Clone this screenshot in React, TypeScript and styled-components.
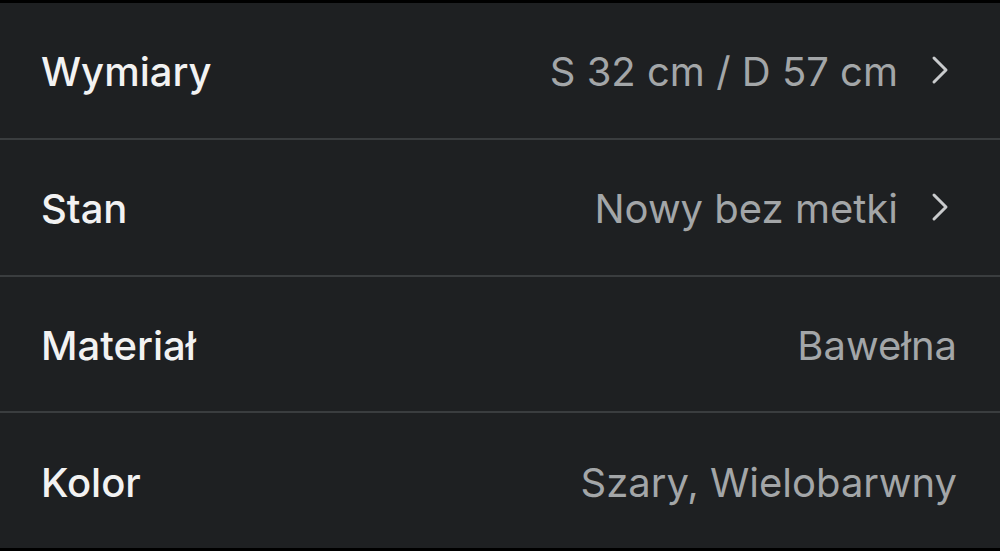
import React from 'react'
import styled, { createGlobalStyle } from 'styled-components'

const GlobalStyle = createGlobalStyle`
  html, body {
    margin: 0;
    padding: 0;
    background: #000;
  }
  body {
    font-family: Inter, "Noto Sans", sans-serif;
  }
`

interface Detail {
  label: string
  value: string
  link?: boolean
}

const details: Detail[] = [
  { label: 'Wymiary', value: 'S 32 cm / D 57 cm', link: true },
  { label: 'Stan', value: 'Nowy bez metki', link: true },
  { label: 'Materiał', value: 'Bawełna' },
  { label: 'Kolor', value: 'Szary, Wielobarwny' },
]

const Chevron = () => (
  <svg width="18" height="30" viewBox="0 0 18 30" fill="none">
    <path d="M3 3 L15 15 L3 27" stroke="#c9cbcd" strokeWidth="3" strokeLinecap="round" strokeLinejoin="round" />
  </svg>
)

const App: React.FC = () => (
  <>
    <GlobalStyle />
    <StyledScreen>
      <StyledList>
        {details.map((d) => (
          <StyledRow key={d.label}>
            <StyledLabel>{d.label}</StyledLabel>
            <StyledValue $link={d.link}>
              {d.value}
              {d.link && <Chevron />}
            </StyledValue>
          </StyledRow>
        ))}
      </StyledList>
    </StyledScreen>
  </>
)

const StyledScreen = styled.div`
  width: 1000px;
  height: 551px;
  padding: 3px 0;
  box-sizing: border-box;
  background: #000;
`

const StyledList = styled.div`
  height: 100%;
  display: flex;
  flex-direction: column;
  background: #1e2022;
`

const StyledRow = styled.div`
  flex: 1;
  display: flex;
  align-items: center;
  justify-content: space-between;
  padding: 3px 43px 0 41px;
  & + & {
    border-top: 2px solid #3a3d3f;
  }
`

const StyledLabel = styled.div`
  font-size: 40px;
  font-weight: 500;
  color: #f2f2f2;
`

const StyledValue = styled.div<{ $link?: boolean }>`
  display: flex;
  align-items: center;
  gap: 33px;
  font-size: 40px;
  color: #a3a6a8;
  margin-right: ${(p) => (p.$link ? '8px' : '0')};

  svg {
    margin-top: -3px;
  }
`

export default App
